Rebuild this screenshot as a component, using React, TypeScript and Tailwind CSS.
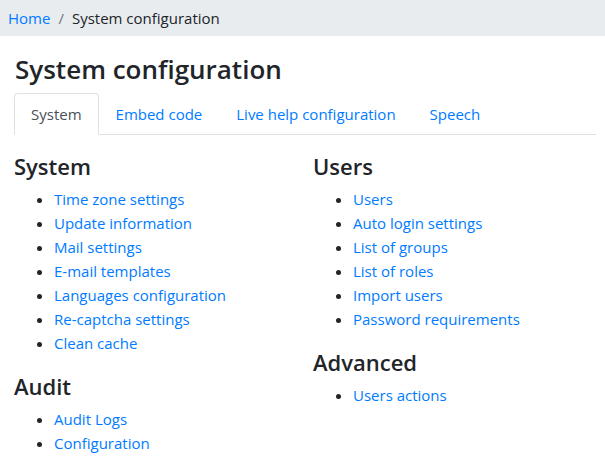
const systemLinks = [
  "Time zone settings",
  "Update information",
  "Mail settings",
  "E-mail templates",
  "Languages configuration",
  "Re-captcha settings",
  "Clean cache",
];
const auditLinks = ["Audit Logs", "Configuration"];
const userLinks = [
  "Users",
  "Auto login settings",
  "List of groups",
  "List of roles",
  "Import users",
  "Password requirements",
];
const advancedLinks = ["Users actions"];

const tabs = ["System", "Embed code", "Live help configuration", "Speech"];

function Section({ title, links, className = "" }: { title: string; links: string[]; className?: string }) {
  return (
    <div className={className}>
      <h3 className="text-[22px] leading-[28px] font-semibold text-[#212529] mb-[7px]">{title}</h3>
      <ul className="list-disc pl-[40px] text-[15px] leading-[24px]">
        {links.map(l => (
          <li key={l} className="marker:text-[#212529]">
            <a href="#" className="text-[#007bff]">{l}</a>
          </li>
        ))}
      </ul>
    </div>
  );
}

export default function App() {
  return (
    <div className="w-[605px] h-[461px] overflow-hidden bg-white text-[#212529]" style={{ fontFamily: "'Open Sans', Arial, sans-serif" }}>
      {/* Breadcrumb */}
      <nav className="h-[36px] bg-[#e9ecef] flex items-center px-[8px] text-[15px]">
        <a href="#" className="text-[#007bff]">Home</a>
        <span className="text-[#6c757d] px-[8px]">/</span>
        <span className="text-[#212529]">System configuration</span>
      </nav>

      <div className="pl-[14px] pr-[9px]">
        <h1 className="text-[26px] leading-[32px] font-semibold mt-[17px] mb-[8px] pl-[1px]">System configuration</h1>

        {/* Tabs */}
        <div className="flex border-b border-[#dee2e6] text-[15px] leading-[24px]">
          {tabs.map((t, i) => (
            <a
              key={t}
              href="#"
              className={
                i === 0
                  ? "px-[16px] py-[8px] border border-[#dee2e6] border-b-white rounded-t-[4px] text-[#495057] bg-white -mb-px"
                  : "px-[16px] py-[8px] border border-transparent text-[#007bff] -mb-px"
              }
            >
              {t}
            </a>
          ))}
        </div>

        {/* Sections */}
        <div className="grid grid-cols-[299px_1fr] mt-[17px]">
          <div>
            <Section title="System" links={systemLinks} />
            <Section title="Audit" links={auditLinks} className="mt-[17px]" />
          </div>
          <div>
            <Section title="Users" links={userLinks} />
            <Section title="Advanced" links={advancedLinks} className="mt-[17px]" />
          </div>
        </div>
      </div>
    </div>
  );
}
